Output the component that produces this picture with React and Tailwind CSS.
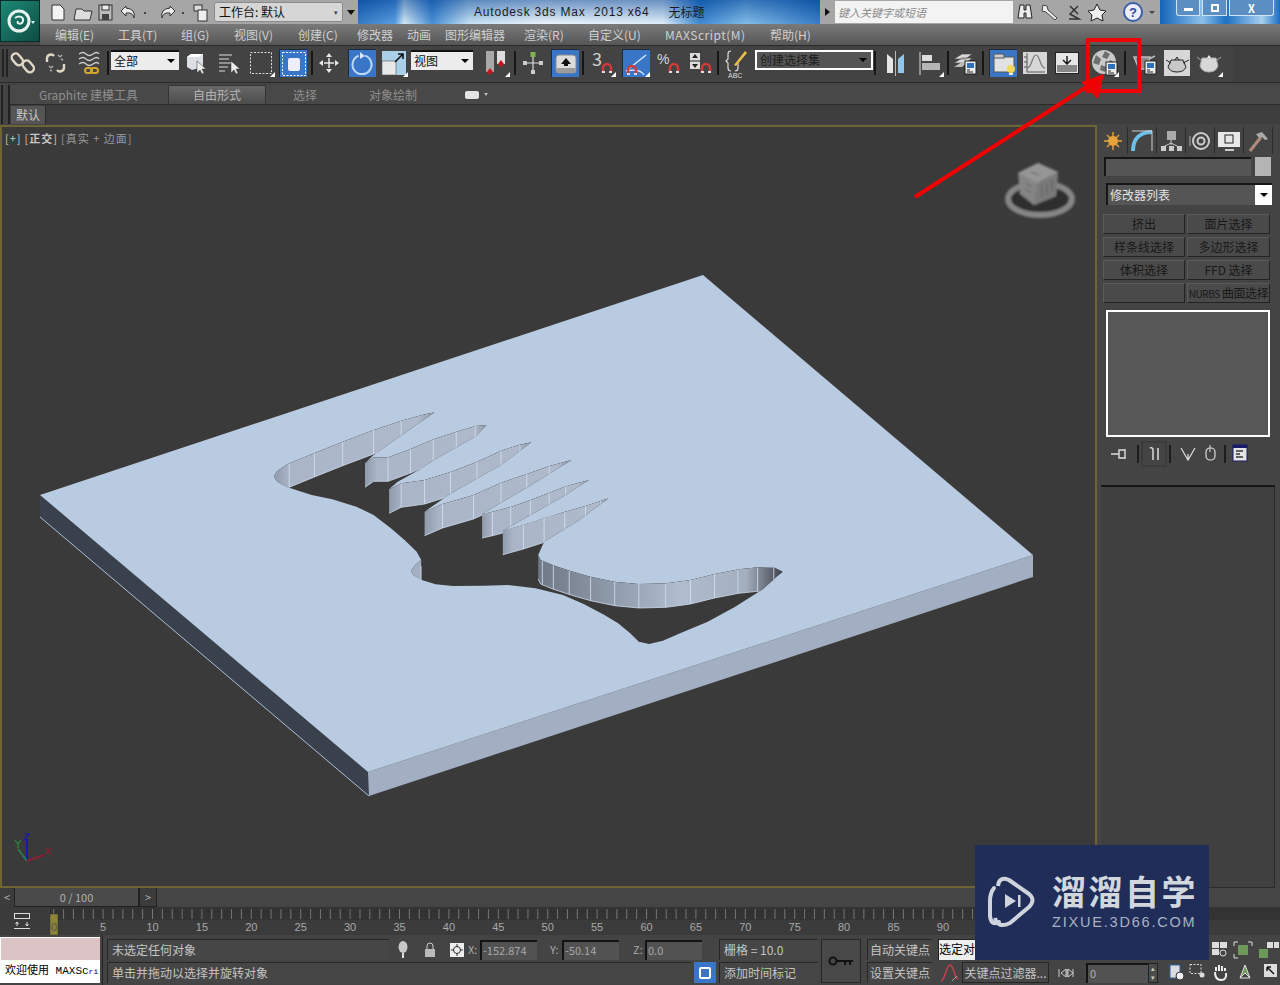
import React from "react";

// points below are read off a 3x crop of the hole, so convert back to page coords
const z = ([x, y]) => [260 + x / 2.904, 400 + y / 3];
const pts = (list) => list.map(z);
const str = (list) => list.map((p) => p[0].toFixed(1) + "," + p[1].toFixed(1)).join(" ");

const f1 = pts([[40,230],[48,215],[80,192],[160,158],[240,125],[330,90],[410,62],[470,45],[507,37]]);
const f2 = pts([[305,190],[330,172],[372,172],[435,148],[503,118],[570,95],[625,78],[658,75]]);
const f3 = pts([[375,268],[410,250],[478,240],[555,215],[630,185],[700,152],[750,135],[788,127]]);
const f4 = pts([[478,335],[530,312],[620,285],[700,248],[775,222],[840,198],[905,180]]);
const f5 = pts([[645,342],[675,335],[730,320],[785,300],[840,278],[890,258],[955,240]]);
const f6 = pts([[705,392],[765,375],[825,355],[885,335],[945,318],[1012,295]]);
const palm = pts([[808,465],[815,480],[850,495],[900,512],[960,530],[1030,545],[1100,552],[1180,550],[1250,540],[1320,522],[1390,508],[1445,502],[1495,503],[1518,515]]);
const hole = [
  ...f1, ...pts([[440,85],[330,165]]),
  ...f2, ...pts([[625,110],[505,180],[465,208],[400,245]]),
  ...f3, ...pts([[700,195],[555,280]]),
  ...f4, ...pts([[780,260]]),
  ...f5, ...pts([[880,290]]),
  ...f6, ...pts([[920,365],[825,425]]),
  ...palm,
  ...pts([[1500,530],[1460,568],[1380,620],[1300,665],[1220,700],[1170,722],[1130,732],[1100,725],[1075,700],[1040,670],[1000,645],[940,612],[880,585],[800,565],[720,555],[650,557],[560,558],[510,553],[470,540],[445,525],[438,512],[450,495],[468,480],[455,455],[420,420],[380,385],[330,345],[280,320],[210,298],[150,285],[80,262],[50,245]]),
];
const nubWall = pts([[468,480],[450,495],[438,512],[445,525],[468,540]]);

const fingers = [
  { line: f1, ticks: [85,158,240,330,410] },
  { line: f2, ticks: [372,437,503,570,625] },
  { line: f3, ticks: [410,478,553,630,700,755] },
  { line: f4, ticks: [530,620,700,775,840] },
  { line: f5, ticks: [675,728,785,840,888] },
  { line: f6, ticks: [765,825,885,945,990] },
];
const palmTicks = [820,852,898,960,1030,1100,1178,1250,1320,1388,1445,1492];

const yAt = (line, zx) => {
  const x = 260 + zx / 2.904;
  for (let i = 0; i < line.length - 1; i++) {
    if (x >= line[i][0] && x <= line[i + 1][0]) {
      const t = (x - line[i][0]) / (line[i + 1][0] - line[i][0] || 1);
      return line[i][1] + t * (line[i + 1][1] - line[i][1]);
    }
  }
  return line[0][1];
};
const wall = (line) => [...line, ...line.slice().reverse().map((p) => [p[0], p[1] + 24])];

const Plate = () => (
  <svg viewBox="0 125 1097 763" className="absolute inset-0 w-full h-full">
    <defs>
      <linearGradient id="wallG" x1="0" x2="1" y1="0" y2="0">
        <stop offset="0" stopColor="#8f9aab" />
        <stop offset="0.1" stopColor="#aab5c7" />
        <stop offset="0.9" stopColor="#aeb9cb" />
        <stop offset="1" stopColor="#8e98a8" />
      </linearGradient>
      <linearGradient id="palmG" x1="0" x2="1" y1="0" y2="0">
        <stop offset="0" stopColor="#6f7885" />
        <stop offset="0.3" stopColor="#8f9aaa" />
        <stop offset="0.58" stopColor="#b0bdce" />
        <stop offset="0.85" stopColor="#a3aebe" />
        <stop offset="1" stopColor="#3d424b" />
      </linearGradient>
      <clipPath id="holeClip"><polygon points={str(hole)} /></clipPath>
    </defs>
    <polygon points="40,495 368,772 369,796 40,517" fill="#39414d" />
    <polygon points="368,772 1033,555 1033,577 369,796" fill="#a2aec1" />
    <polygon points="40,495 703,275 1033,555 368,772" fill="#b9cbe1" />
    <polyline points="40,517 369,796" stroke="#aebfd6" strokeWidth="1" fill="none" />
    <polygon points={str(hole)} fill="#3a3a3a" />
    <g clipPath="url(#holeClip)">
      {fingers.map((f, i) => (
        <g key={i}>
          <polygon points={str(wall(f.line))} fill="url(#wallG)" />
          <polyline points={str(f.line.map((p) => [p[0], p[1] + 24]))} fill="none" stroke="#cfdcee" strokeWidth="0.8" />
          {f.ticks.map((t) => {
            const x = 260 + t / 2.904;
            const y = yAt(f.line, t);
            return <line key={t} x1={x} x2={x} y1={y} y2={y + 24} stroke="#d6e3f3" strokeWidth="0.8" />;
          })}
        </g>
      ))}
      <polygon points={str(wall(palm))} fill="url(#palmG)" />
      <polyline points={str(palm.map((p) => [p[0], p[1] + 24]))} fill="none" stroke="#cfdcee" strokeWidth="0.8" />
      {palmTicks.map((t) => {
        const x = 260 + t / 2.904;
        const y = yAt(palm, t);
        return <line key={t} x1={x} x2={x} y1={y} y2={y + 24} stroke="#d6e3f3" strokeWidth="0.8" />;
      })}
    </g>
    <polygon points={str(nubWall)} fill="#a3afc0" />
    <line x1="421" x2="421" y1="566" y2="580" stroke="#d6e3f3" strokeWidth="0.8" />
  </svg>
);

const ViewCube = () => (
  <svg width="80" height="70" viewBox="0 0 80 70" className="absolute left-[999px] top-[33px]">
    <defs><filter id="soft"><feGaussianBlur stdDeviation="0.9" /></filter></defs>
    <g filter="url(#soft)">
      <ellipse cx="41" cy="41" rx="32" ry="16" fill="#2f2f2f" stroke="#858585" strokeWidth="6" />
      <polygon points="19,15 39,5 59,14 57,38 35,47 21,36" fill="#858585" />
      <polygon points="19,15 39,5 59,14 38,25" fill="#969696" />
      <polygon points="38,25 59,14 57,38 35,47" fill="#7a7a7a" />
      <path d="M43 27v12M48 25v12M53 22v12M27 25l6 4M26 31l6 3M32 14l8 3" stroke="#5c5c5c" strokeWidth="1" />
    </g>
  </svg>
);

const AxisTripod = () => (
  <svg width="44" height="36" viewBox="0 0 44 36" className="absolute left-[10px] top-[706px]">
    <path d="M17 30V8" stroke="#1a1aa8" strokeWidth="2" />
    <path d="M25 3h5l-5 6h5" transform="translate(-11 0)" stroke="#1a1aa8" strokeWidth="1.2" fill="none" />
    <path d="M17 30L8 18" stroke="#2a7a4c" strokeWidth="2" />
    <path d="M5 9l3 4 3-4M8 13v4" stroke="#2f8a3a" strokeWidth="1.2" fill="none" />
    <path d="M17 30l17-6" stroke="#8a2030" strokeWidth="2" />
    <path d="M36 17l5 6M41 17l-5 6" stroke="#8a2030" strokeWidth="1.2" />
  </svg>
);

const Corner = () => <span className="absolute right-0 bottom-0 w-0 h-0 border-l-[5px] border-l-transparent border-b-[5px] border-b-white" />;

const Slot = ({ w = "w-[32px]", blue, corner, children }) => (
  <div className={`${w} h-[28px] flex items-center justify-center relative shrink-0`}>
    <div className={`w-[28px] h-[28px] flex items-center justify-center relative ${blue ? "bg-[#3a76c8] border-t border-l border-[#1e2a3a]" : ""}`}>
      {children}
      {corner && <Corner />}
    </div>
  </div>
);

const Ic = ({ children }) => <svg width="26" height="26" viewBox="0 0 26 26" fill="none">{children}</svg>;
const Cursor = ({ x, y }) => <path d={`M${x} ${y}v12l3-3 2 4 2-1-2-4h4z`} fill="#eee" stroke="#333" strokeWidth="0.5" />;
const Sep = ({ m = "mx-[2px]" }) => <div className={`w-[2px] h-[24px] bg-[#161616] shrink-0 ${m}`} />;
const Magnet = ({ x = 14, y = 16 }) => (
  <g transform={`translate(${x} ${y})`}>
    <path d="M0 9V4a4 4 0 018 0v5" stroke="#d23a3a" strokeWidth="2.5" />
    <path d="M-1 8h3M6 8h3" stroke="#ddd" strokeWidth="2" />
  </g>
);
const MiniDoc = ({ x, y }) => (
  <g transform={`translate(${x} ${y})`}>
    <rect width="11" height="13" fill="#eee" stroke="#222" />
    <rect x="2" y="2" width="7" height="5" fill="#2f6fb8" />
    <path d="M2 9h3M2 11h6" stroke="#222" />
  </g>
);

const Dropdown = ({ w, label, dark }) => (
  <div className={`${w} h-[20px] mb-[7px] shrink-0 flex items-center justify-between border-t-2 border-[#111] pl-[3px] pr-[4px] text-[12px] ${dark ? "bg-[#555] text-[#1d1d1d] border-2 border-white" : "bg-[#ececec] text-[#111]"}`}>
    <span className="leading-none">{label}</span>
    <span className="w-0 h-0 border-l-[4px] border-r-[4px] border-t-[4px] border-l-transparent border-r-transparent border-t-black" />
  </div>
);

const Toolbar = () => (
  <div className="h-[38px] pb-[2px] bg-[#434343] border-t border-b border-[#2a2a2a] flex items-center shrink-0 relative">
    <div className="w-[6px] h-[28px] ml-[2px] border-l-2 border-r-2 border-[#222] shrink-0 mr-[-2px]" />
    <Slot w="w-[33px]"><Ic>
      <rect x="3" y="3" width="8" height="13" rx="4" transform="rotate(-40 7 9)" stroke="#e0d8c4" strokeWidth="2.4" />
      <rect x="14" y="10" width="8" height="13" rx="4" transform="rotate(-40 18 16)" stroke="#e0d8c4" strokeWidth="2.4" />
    </Ic></Slot>
    <Slot w="w-[33px]"><Ic>
      <path d="M4 12V8a4 4 0 017-2M21 14v4a4 4 0 01-7 2" stroke="#e0d8c4" strokeWidth="2.4" />
      <path d="M15 5l2 2M19 5l-2 2M18 9l2 1M6 16l2 2M10 16l-2 2M7 20l2 1" stroke="#aaa" strokeWidth="1.4" />
    </Ic></Slot>
    <Slot w="w-[33px]"><Ic>
      <path d="M3 4q4-3 7 0t7 0 6 0M3 9q4-3 7 0t7 0 6 0M3 14q4-3 7 0t7 0 6 0" stroke="#cfcfcf" strokeWidth="1.3" />
      <rect x="9" y="18" width="7" height="5" rx="2.5" stroke="#d4a82a" strokeWidth="2" />
      <rect x="15" y="18" width="7" height="5" rx="2.5" stroke="#d4a82a" strokeWidth="2" />
    </Ic></Slot>
    <Sep />
    <Dropdown w="w-[68px]" label="全部" />
    <Slot w="w-[34px]"><Ic>
      <polygon points="4,7 8,4 20,4 20,17 9,20 4,17" fill="#dcdfe4" />
      <polygon points="8,4 20,4 16,7 4,7" fill="#fff" />
      <Cursor x={14} y={11} />
    </Ic></Slot>
    <Slot><Ic>
      <path d="M3 5h13M3 9h10M3 13h13M3 17h9M3 21h6" stroke="#ddd" strokeWidth="1.2" />
      <Cursor x={15} y={11} />
    </Ic></Slot>
    <Slot corner><Ic><rect x="2.5" y="2.5" width="21" height="21" stroke="#ddd" strokeDasharray="2 1.5" /></Ic></Slot>
    <Slot blue><Ic>
      <rect x="1.5" y="1.5" width="23" height="23" stroke="#fff" strokeDasharray="2 1.5" />
      <rect x="7" y="7" width="12" height="13" rx="2" fill="#eef" />
    </Ic></Slot>
    <Sep m="ml-[2px] mr-0" />
    <Slot w="w-[32px]"><Ic>
      <path d="M13 3l-3 4h6zM13 23l-3-4h6zM3 13l4-3v6zM23 13l-4-3v6z" fill="#e8e8e8" />
      <path d="M8 13h10M13 8v10" stroke="#e8e8e8" strokeWidth="1.5" />
    </Ic></Slot>
    <Slot w="w-[33px]" blue><Ic>
      <path d="M16 4.6a9.5 9.5 0 11-6.500.2" stroke="#bcd8f5" strokeWidth="2" />
      <path d="M11 1l5 4-5 3z" fill="#d6e8fb" />
    </Ic></Slot>
    <Slot corner><Ic>
      <rect x="1" y="1" width="24" height="24" fill="#a9cfe9" />
      <rect x="1" y="11" width="14" height="14" fill="#e8e8e8" stroke="#555" strokeWidth="0.6" />
      <path d="M14 12l8-8M17 4h5v5" stroke="#111" strokeWidth="1.6" />
    </Ic></Slot>
    <Dropdown w="w-[62px] ml-[1px]" label="视图" />
    <div className="w-[5px] shrink-0" />
    <Slot w="w-[35px]" corner><Ic>
      <rect x="3" y="1" width="8" height="21" fill="#a9a9a9" /><rect x="14" y="1" width="8" height="13" fill="#ddd" />
      <path d="M7 18l3 4-3 3-3-3zM18 10l3 4-3 3-3-3z" fill="#c8161d" />
    </Ic></Slot>
    <Sep m="mx-[1px]" />
    <Slot><Ic>
      <path d="M13 5v16M5 13h16" stroke="#ddd" strokeWidth="1.2" />
      <rect x="10.500" y="2" width="5" height="5" fill="#7db54a" />
      <rect x="3" y="11" width="4" height="4" fill="#ccc" /><rect x="19" y="11" width="4" height="4" fill="#ccc" /><rect x="11" y="20" width="4" height="4" fill="#ccc" />
    </Ic></Slot>
    <Slot blue><Ic>
      <rect x="3" y="4" width="20" height="18" rx="3" fill="#dcdcdc" stroke="#888" />
      <path d="M13 7l-5 6h3v2h4v-2h3z" fill="#111" />
      <rect x="3" y="17" width="20" height="5" rx="2" fill="#9b9b9b" />
    </Ic></Slot>
    <Sep m="mx-[1px]" />
    <Slot w="w-[34px]" corner><span className="text-[18px] text-[#d0d0d0] leading-none absolute left-[4px] top-[0px]">3</span><svg width="26" height="26" viewBox="0 0 26 26" fill="none"><Magnet x={14} y={14} /></svg></Slot>
    <Slot w="w-[34px]" blue corner><Ic>
      <path d="M2 20L22 4M2 20q14-3 18 4" stroke="#dfefff" strokeWidth="1.3" />
      <Magnet x={4} y={15} />
    </Ic></Slot>
    <Slot w="w-[31px]"><Ic>
      <text x="1" y="14" fill="#d8d8d8" fontSize="14" fontFamily="Liberation Sans">%</text>
      <Magnet x={14} y={14} />
    </Ic></Slot>
    <Slot w="w-[31px]"><Ic>
      <rect x="3" y="3" width="10" height="16" fill="#ddd" />
      <path d="M8 4l-3 4h6zM8 18l-3-4h6z" fill="#222" />
      <path d="M3 11h10" stroke="#222" />
      <Magnet x={15} y={14} />
    </Ic></Slot>
    <Sep m="ml-[2px] mr-[1px]" />
    <Slot><svg width="26" height="30" viewBox="0 0 26 30" fill="none">
      <path d="M8 3q-3 0-3 3v5l-2 2 2 2v5q0 3 3 3M15 13v7q0 3-3 3" stroke="#ddd" strokeWidth="1.2" />
      <path d="M11 17L22 3l2 2-11 13z" fill="#e8c04a" />
      <text x="5" y="30" fill="#ddd" fontSize="7" fontFamily="Liberation Sans">ABC</text>
    </svg></Slot>
    <div className="w-[3px] shrink-0" />
    <Dropdown w="w-[118px]" label="创建选择集" dark />
    <Sep m="ml-[1px] mr-[4px]" />
    <Slot><Ic>
      <path d="M4 4l6 5v14H4z" fill="#e6e6e6" />
      <path d="M21 4l-6 5v14h6z" fill="#8fc7ec" />
      <path d="M12.500 1v25" stroke="#bbb" />
    </Ic></Slot>
    <div className="w-[2px] shrink-0" />
    <Slot corner><Ic>
      <path d="M3 2v23" stroke="#ddd" />
      <rect x="5" y="5" width="10" height="6" fill="#ddd" /><rect x="5" y="13" width="18" height="7" fill="#b5b5b5" />
    </Ic></Slot>
    <Sep m="ml-[1px] mr-0" />
    <Slot><Ic>
      <path d="M2 13l8-5h10l-6 5zM2 9l8-5h10l-6 5z" fill="#d8d8d8" stroke="#444" strokeWidth="0.6" />
      <path d="M2 17l8-5h6l-6 5z" fill="#bbb" />
      <MiniDoc x={13} y={11} />
    </Ic></Slot>
    <Sep m="ml-[1px] mr-[3px]" />
    <Slot blue><Ic>
      <rect x="3" y="6" width="20" height="15" fill="#e2e2e2" stroke="#555" /><rect x="3" y="3" width="10" height="4" fill="#ccc" stroke="#555" />
      <circle cx="20" cy="18" r="4" fill="#f3d75a" /><path d="M18 23h4" stroke="#eee" strokeWidth="2" />
    </Ic></Slot>
    <Slot><Ic>
      <rect x="1" y="2" width="24" height="22" fill="#d7d7d7" />
      <path d="M5 3v19h18M2 7h3M2 12h3M2 17h3" stroke="#555" />
      <path d="M5 18c5 0 5-13 9-13s4 13 9 13" stroke="#777" strokeWidth="1.2" />
    </Ic></Slot>
    <Slot><Ic>
      <rect x="1.500" y="2.500" width="23" height="21" fill="#e6e6e6" stroke="#222" />
      <rect x="3" y="15" width="20" height="7" fill="#888" />
      <path d="M13 6v7M9 10l4 4 4-4" stroke="#111" strokeWidth="1.4" />
    </Ic></Slot>
    <div className="w-[6px] shrink-0" />
    <Slot corner><Ic>
      <circle cx="12" cy="12" r="12" fill="#c9c9c9" />
      <path d="M4 5l5 4-2 6-6-2zM13 1l5 3-3 5-5-2zM9 15l6 2-2 5-5-2zM18 10l4 2-2 6-4-3z" fill="#6e6e6e" />
      <MiniDoc x={14} y={12} />
    </Ic></Slot>
    <Sep m="mx-[3px]" />
    <Slot><Ic>
      <path d="M2 7h16l-3 12H7zM17 9l6-3" stroke="#bbb" strokeWidth="1.5" fill="#8a8a8a" />
      <MiniDoc x={13} y={11} />
    </Ic></Slot>
    <Slot><Ic>
      <rect x="-1" y="0" width="28" height="26" fill="#d7d7d7" />
      <path d="M7 10h12l3 7q-2 5-9 5t-9-5zM7 13L2 10M19 13l6-3M11 10l2-3 2 3" stroke="#222" fill="#c8c8c8" />
    </Ic></Slot>
    <Slot corner><Ic>
      <path d="M6 8h14l2 8q-2 6-9 6t-9-6zM6 11L1 7M20 11l5-4" stroke="#aaa" fill="#d8d8d8" />
      <path d="M11 8l2-3 2 3" fill="#eee" />
    </Ic></Slot>
    <div className="absolute right-0 top-0 bottom-0 w-[46px] bg-[#3f3f3f]" />
  </div>
);

const MENU = [
  ["编辑(E)", "w-[63px]"], ["工具(T)", "w-[63px]"], ["组(G)", "w-[53px]"], ["视图(V)", "w-[64px]"],
  ["创建(C)", "w-[59px]"], ["修改器", "w-[50px]"], ["动画", "w-[38px]"], ["图形编辑器", "w-[79px]"],
  ["渲染(R)", "w-[64px]"], ["自定义(U)", "w-[77px]"], ["MAXScript(M)", "w-[105px] tracking-[0.5px]"], ["帮助(H)", "w-[60px]"],
];

const TitleBar = () => (
  <div className="h-[24px] flex items-stretch bg-[#a6a6a6]">
    <div className="w-[318px] flex items-center pl-[8px] relative shrink-0">
      <svg width="170" height="20" viewBox="0 0 170 20" fill="none" className="shrink-0">
        <path d="M4 3h8l4 4v11H4z" fill="#f4f4f4" stroke="#333" />
        <path d="M28 7h6l2 2h8l-2 9H26z" fill="#ddd" stroke="#333" />
        <rect x="51" y="3" width="13" height="15" fill="#bbb" stroke="#333" /><rect x="54" y="3" width="7" height="5" fill="#eee" stroke="#333" /><rect x="54" y="12" width="7" height="6" fill="#444" />
        <path d="M78 4l-5 5 5 5v-3q7-1 8 5 2-9-8-10z" fill="#eee" stroke="#333" />
        <rect x="96" y="10" width="2" height="2" fill="#444" />
        <path d="M122 4l5 5-5 5v-3q-7-1-8 5-2-9 8-10z" fill="#eee" stroke="#333" />
        <rect x="134" y="10" width="2" height="2" fill="#444" />
        <rect x="146" y="3" width="8" height="6" fill="#ddd" stroke="#333" /><rect x="150" y="8" width="9" height="11" fill="#eee" stroke="#333" />
      </svg>
      <div className="w-[129px] h-[20px] ml-[-4px] bg-[#d6d6d6] border border-[#8a8a8a] rounded-[2px] flex items-center justify-between px-[4px] text-[12px] text-[#111]">
        <span>工作台: 默认</span>
        <span className="text-[7px] text-[#444]">▾</span>
      </div>
      <span className="w-0 h-0 ml-[4px] border-l-[4px] border-r-[4px] border-t-[5px] border-l-transparent border-r-transparent border-t-[#111]" />
    </div>
    <div className="w-[462px] shrink-0 flex items-center relative bg-[linear-gradient(90deg,#1565b8_0%,#3d8fdb_8%,#cfe6f6_10%,#2b7ccc_16%,#bcdcf2_24%,#e8f2fa_40%,#dcecf8_66%,#1f75c8_74%,#6eb1e4_84%,#1566ba_100%)]">
      <div className="absolute inset-0 bg-[linear-gradient(180deg,rgba(10,70,150,0.55),rgba(255,255,255,0.15))]" />
      <span className="relative ml-[116px] text-[12px] tracking-[0.8px] text-[#1c1c1c] font-['Liberation_Sans','Noto_Sans_CJK_SC',sans-serif] whitespace-pre">Autodesk 3ds Max  2013 x64</span>
      <span className="relative ml-[19px] text-[12px] text-[#1c1c1c]">无标题</span>
    </div>
    <div className="w-[15px] shrink-0 flex items-center justify-center">
      <span className="w-0 h-0 border-t-[4px] border-b-[4px] border-l-[5px] border-t-transparent border-b-transparent border-l-[#111]" />
    </div>
    <div className="w-[178px] h-[22px] bg-[#f3f3f3] shrink-0 self-center flex items-center pl-[3px] text-[11px] italic text-[#8a8a8a]">键入关键字或短语</div>
    <div className="w-[147px] shrink-0 flex items-center">
      <svg width="147" height="22" viewBox="0 0 147 22" fill="none">
        <path d="M7 4h4v5h2V4h4l2 13h-6V12h-2v5H5z" fill="#eee" stroke="#222" />
        <path d="M30 4l4 1 1 4 9 8-2 2-9-8-4-1z" fill="#eee" stroke="#444" />
        <path d="M57 5l8 8M65 5l-8 8 9 5H56" stroke="#333" strokeWidth="1.500" />
        <path d="M84 3l3 6 6 1-4 4 1 6-6-3-6 3 1-6-4-4 6-1z" fill="#eee" stroke="#222" />
        <circle cx="120" cy="11" r="9" fill="#eef" stroke="#3a5fa8" strokeWidth="2" />
        <text x="116" y="16" fontSize="13" fontWeight="700" fill="#2a4a9c" fontFamily="Liberation Sans">?</text>
        <path d="M136 10l3 3 3-3z" fill="#444" />
      </svg>
    </div>
    <div className="flex-1 flex items-start pl-[16px] bg-[linear-gradient(90deg,#1565b8,#8cc0ea_35%,#1e70c2_55%,#a8d0ee_85%,#1b6cc0)]">
      <div className="w-[24px] h-[16px] rounded-bl-[3px] bg-[#5b8fc4] border border-[#d0e4f5] border-t-0 flex items-center justify-center">
        <span className="w-[9px] h-[3px] bg-white mt-[3px]" />
      </div>
      <div className="w-[25px] h-[16px] ml-[2px] bg-[#5b8fc4] border border-[#d0e4f5] border-t-0 flex items-center justify-center">
        <span className="w-[8px] h-[8px] border-2 border-white" />
      </div>
      <div className="w-[45px] h-[16px] ml-[2px] rounded-br-[3px] bg-[#5b8fc4] border border-[#d0e4f5] border-t-0 flex items-center justify-center text-[11px] font-bold text-white leading-[14px]">X</div>
    </div>
  </div>
);

const Header = () => (
  <div className="flex shrink-0 h-[45px]">
    <div className="w-[40px] h-[42px] bg-[linear-gradient(135deg,#1c8a76,#0e4c43)] border border-[#082e28] flex items-center justify-center shrink-0">
      <svg width="30" height="30" viewBox="0 0 30 30" fill="none">
        <circle cx="14" cy="15" r="10" stroke="#e8f4f0" strokeWidth="3" />
        <path d="M10 12c4-3 9-1 8 3s-7 3-5 0" stroke="#e8f4f0" strokeWidth="2" />
        <path d="M26 15l4 0-2 3z" fill="#cfe" />
      </svg>
    </div>
    <div className="flex-1 min-w-0 flex flex-col">
      <TitleBar />
      <div className="h-[21px] flex items-center pl-[15px] bg-[linear-gradient(180deg,#7a7a7a,#565656)] text-[12px] text-[#cfcfcf]">
        {MENU.map(([label, w]) => <span key={label} className={`${w} shrink-0`}>{label}</span>)}
      </div>
    </div>
  </div>
);

const Ribbon = () => (
  <div className="shrink-0 mt-[2px] flex">
    <div className="w-[9px] h-[39px] border-l-2 border-r-2 border-[#222] ml-[1px] shrink-0" />
    <div className="flex-1">
      <div className="h-[20px] bg-[#484848] border-b border-[#2b2b2b] flex items-end text-[12px] text-[#8e8e8e]">
        <span className="w-[158px] pl-[29px] self-center">Graphite 建模工具</span>
        <span className="w-[98px] h-[19px] bg-[linear-gradient(180deg,#676767,#4c4c4c)] border border-[#333] border-b-0 rounded-t-[2px] flex items-center justify-center text-[#b5b5b5]">自由形式</span>
        <span className="w-[78px] text-center self-center">选择</span>
        <span className="w-[98px] text-center self-center">对象绘制</span>
        <span className="self-center ml-[23px] w-[14px] h-[8px] bg-[#e4e4e4] rounded-[2px]" />
        <span className="self-center ml-[5px] w-0 h-0 border-l-[2px] border-r-[2px] border-t-[3px] border-l-transparent border-r-transparent border-t-[#bbb]" />
      </div>
      <div className="h-[19px] bg-[#3e3e3e] flex items-center pl-[1px] text-[12px] text-[#c8c8c8]">
        <span className="w-[35px] h-[18px] bg-[#555] border-r border-[#2b2b2b] flex items-center justify-center">默认</span>
      </div>
    </div>
  </div>
);

const Viewport = () => (
  <div className="relative w-[1097px] shrink-0 bg-[#3a3a3a] border-2 border-[#6f6534] overflow-hidden">
    <div className="absolute left-[3px] top-[3px] z-10 text-[11px] text-[#c8c8c8] flex items-center gap-[3px] tracking-[1px] whitespace-pre">
      <span>[+]</span><span>[<b className="font-bold">正交</b>]</span><span className="text-[#999]">[真实 + 边面]</span>
    </div>
    <div className="absolute -left-[2px] -top-[2px] w-[1097px] h-[763px]">
      <Plate />
      <ViewCube />
      <AxisTripod />
    </div>
  </div>
);

const CmdButton = ({ children, cls = "" }) => (
  <div className={`h-[20px] bg-[#4a4a4a] border border-t-[#5a5a5a] border-l-[#5a5a5a] border-r-[#222] border-b-[#222] flex items-center justify-center text-[12px] text-[#181818] whitespace-nowrap overflow-hidden ${cls}`}>{children}</div>
);

const CommandPanel = () => (
  <div className="flex-1 min-w-0 bg-[#444] flex flex-col">
    <div className="h-[27px] mt-[2px] flex items-center pl-[2px]">
      {[
        <svg key="a" width="24" height="24" viewBox="0 0 24 24"><circle cx="12" cy="12" r="5" fill="#e7a23b" /><path d="M12 3v18M3 12h18M6 6l12 12M18 6L6 18" stroke="#e7a23b" strokeWidth="1.4" /></svg>,
        <svg key="b" width="24" height="24" viewBox="0 0 24 24" fill="none"><path d="M3 22C3 10 10 3 22 3" stroke="#6cc0e8" strokeWidth="4" /><path d="M2 2h20v20" stroke="#ccc" /></svg>,
        <svg key="c" width="24" height="24" viewBox="0 0 24 24" fill="none"><rect x="8" y="2" width="9" height="9" fill="#aaa" /><path d="M12 11v5M4 18l8-4 8 4" stroke="#ccc" /><rect x="2" y="17" width="5" height="5" fill="#ccc" /><rect x="10" y="17" width="5" height="5" fill="#ccc" /><rect x="18" y="17" width="5" height="5" fill="#ccc" /></svg>,
        <svg key="d" width="24" height="24" viewBox="0 0 24 24" fill="none"><circle cx="13" cy="12" r="8" stroke="#ccc" strokeWidth="2" /><circle cx="13" cy="12" r="3.500" stroke="#ccc" strokeWidth="2" /><path d="M2 7v10" stroke="#888" strokeWidth="1.500" /></svg>,
        <svg key="e" width="24" height="24" viewBox="0 0 24 24" fill="none"><rect x="1" y="3" width="22" height="15" fill="#e8e8e8" /><rect x="8" y="6" width="8" height="8" stroke="#222" /><path d="M8 21h9" stroke="#ccc" strokeWidth="2" /></svg>,
        <svg key="f" width="24" height="24" viewBox="0 0 24 24" fill="none"><path d="M4 22L15 8" stroke="#b08a7a" strokeWidth="3" /><path d="M10 5l6-2 6 7-3 1-3-3-3 1z" fill="#aaa" /></svg>,
      ].map((icon, i) => (
        <div key={i} className="w-[29px] h-[27px] flex items-center justify-center border-r border-[#2b2b2b] shrink-0">{icon}</div>
      ))}
    </div>
    <div className="h-[19px] mt-[3px] ml-[7px] flex gap-[4px]">
      <div className="w-[147px] bg-[#555] border-t-2 border-l-2 border-[#161616]" />
      <div className="w-[16px] bg-[#b4b4b4]" />
    </div>
    <div className="h-[22px] mt-[7px] ml-[9px] w-[166px] bg-[#555] border-t-2 border-l-2 border-[#161616] flex items-center justify-between text-[12px] text-[#e4e4e4] pl-[2px]">
      <span>修改器列表</span>
      <span className="w-[17px] h-[20px] bg-white flex items-center justify-center">
        <span className="w-0 h-0 border-l-[4px] border-r-[4px] border-t-[4px] border-l-transparent border-r-transparent border-t-black" />
      </span>
    </div>
    <div className="mt-[9px] ml-[6px] w-[168px] grid grid-cols-[82px_83px] gap-x-[2px] gap-y-[3px]">
      <CmdButton>挤出</CmdButton>
      <CmdButton>面片选择</CmdButton>
      <CmdButton>样条线选择</CmdButton>
      <CmdButton>多边形选择</CmdButton>
      <CmdButton>体积选择</CmdButton>
      <CmdButton>FFD 选择</CmdButton>
      <CmdButton />
      <CmdButton cls="text-[11px] tracking-[-0.4px]"><span className="text-[10px] mr-[2px]">NURBS</span>曲面选择</CmdButton>
    </div>
    <div className="mt-[7px] ml-[9px] w-[164px] h-[127px] bg-[#575757] border-2 border-white shrink-0" />
    <div className="h-[32px] mt-[1px] ml-[12px] flex items-center text-[#ddd]">
      <svg width="146" height="26" viewBox="0 0 146 26" fill="none">
        <path d="M2 13h8M10 9h6v8h-6zM16 8v10" stroke="#ddd" strokeWidth="1.400" />
        <path d="M29 4v18" stroke="#111" strokeWidth="1.500" />
        <rect x="33" y="1" width="24" height="24" stroke="#333" />
        <path d="M41 7q3-1 3 2v10M49 7v12" stroke="#ddd" strokeWidth="1.500" />
        <path d="M61 4v18" stroke="#111" strokeWidth="1.500" />
        <path d="M72 7l7 12 7-12M79 13v6" stroke="#ddd" strokeWidth="1.200" />
        <rect x="97" y="7" width="9" height="12" rx="4" stroke="#ddd" strokeWidth="1.200" /><path d="M101 4v7" stroke="#ddd" />
        <path d="M116 4v18" stroke="#111" strokeWidth="1.500" />
        <rect x="124" y="4" width="14" height="16" fill="#e4e4e4" stroke="#1a1a6a" /><rect x="124" y="4" width="14" height="3" fill="#1a1a6a" />
        <path d="M127 10h7M127 13h4M127 16h7" stroke="#333" strokeWidth="1.500" />
      </svg>
    </div>
    <div className="h-[2px] mt-[15px] bg-[#161616] ml-[4px] mr-[5px] shrink-0" />
    <div className="flex-1 bg-[#404040] border-r border-[#2b2b2b] border-b border-b-[#2b2b2b] ml-[4px] mr-[5px]" />
  </div>
);

const SliderRow = () => (
  <div className="h-[19px] shrink-0 bg-[#454545] flex items-stretch text-[11px] text-[#b0b0b0]">
    <div className="w-[15px] bg-[#3c3c3c] border-r border-[#222] flex items-center justify-center">&lt;</div>
    <div className="w-[125px] bg-[#4a4a4a] border-r-2 border-b border-[#222] flex items-center justify-center">0 / 100</div>
    <div className="w-[17px] bg-[#3c3c3c] border-r border-b border-[#222] flex items-center justify-center">&gt;</div>
  </div>
);

const FRAMES = Array.from({ length: 101 }, (_, i) => i);

const TrackBar = () => (
  <div className="h-[28px] shrink-0 bg-[#3b3b3b] flex items-stretch relative">
    <div className="w-[50px] shrink-0 flex items-center pl-[12px]">
      <svg width="20" height="20" viewBox="0 0 20 20" fill="none" stroke="#ddd">
        <rect x="2.500" y="2.500" width="15" height="5" /><path d="M5 11v4M3.500 13L5 11l1.500 2M15 15v-4M13.500 13l1.500 2 1.500-2M2 17.500h16" />
      </svg>
    </div>
    <svg width="1230" height="28" viewBox="0 0 1230 28" className="shrink-0">
      <rect width="1230" height="13" fill="#333" />
      {FRAMES.map((f) => <line key={f} x1={3.7 + f * 9.88} x2={3.7 + f * 9.88} y1="2" y2="12" stroke="#888" strokeWidth="0.8" />)}
      {FRAMES.filter((f) => f % 5 === 0 && f > 0).map((f) => (
        <text key={f} x={3.7 + f * 9.88} y="24" textAnchor="middle" fontSize="11" fill="#a8a8a8" fontFamily="Liberation Sans">{f}</text>
      ))}
      <rect x="0" y="7" width="8" height="21" fill="#8c8436" stroke="#333" strokeWidth="0.5" />
      <text x="4" y="24" textAnchor="middle" fontSize="11" fill="#555" fontFamily="Liberation Sans">0</text>
    </svg>
  </div>
);

const Field = ({ label, value, ml }) => (
  <div className={`flex items-center shrink-0 ${ml}`}>
    <span className="text-[11px] text-[#aaa] w-[12px]">{label}</span>
    <div className="w-[57px] h-[20px] bg-[#525252] border-t-2 border-l-2 border-[#141414] text-[11px] text-[#a8a8a8] flex items-center pl-[1px] overflow-hidden">{value}</div>
  </div>
);

const Flat = ({ cls = "", children }) => (
  <div className={`h-[21px] shrink-0 bg-[#464646] border-t border-l border-[#262626] flex items-center text-[12px] text-[#c4c4c4] ${cls}`}>{children}</div>
);

const StatusBar = () => (
  <div className="flex-1 bg-[#444] flex items-stretch min-h-0">
    <div className="w-[100px] shrink-0 flex flex-col pt-[2px]">
      <div className="h-[23px] bg-[#dcc4c6] border-t border-l border-white" />
      <div className="h-[23px] bg-white flex items-center pl-[5px] text-[11px] text-black whitespace-nowrap overflow-hidden font-['Liberation_Mono','Noto_Sans_CJK_SC',monospace]">欢迎使用 MAXSc<span className="text-[8px]">ri</span></div>
    </div>
    <div className="w-[7px] shrink-0 border-l border-[#222] ml-[2px] mr-[5px]" />
    <div className="flex flex-col pt-[4px] gap-[2px] w-[605px] shrink-0 ml-[-7px]">
      <div className="flex items-center h-[21px]">
        <Flat cls="w-[282px] pl-[4px]">未选定任何对象</Flat>
        <svg width="76" height="20" viewBox="0 0 76 20" fill="none" className="ml-[3px] shrink-0">
          <ellipse cx="11" cy="7" rx="4.500" ry="6" fill="#c8c8c8" /><path d="M11 13v5" stroke="#ddd" strokeWidth="2" />
          <path d="M35 9V6a3 3 0 016 0v3" stroke="#ccc" /><rect x="33" y="9" width="10" height="8" fill="#bbb" />
          <rect x="58" y="3" width="14" height="14" fill="#eee" /><circle cx="65" cy="10" r="3.500" stroke="#333" /><path d="M65 4v3M65 13v3M59 10h3M68 10h3" stroke="#333" />
        </svg>
        <Field label="X:" value="-152.874" ml="ml-0" />
        <Field label="Y:" value="-50.14" ml="ml-[13px]" />
        <Field label="Z:" value="0.0" ml="ml-[14px]" />
      </div>
      <div className="flex items-center h-[21px]">
        <Flat cls="w-[584px] pl-[4px] border-r-0">单击并拖动以选择并旋转对象</Flat>
        <div className="w-[22px] h-[21px] bg-[#3a76c8] ml-[3px] flex items-center justify-center shrink-0">
          <span className="w-[12px] h-[12px] border-2 border-white rounded-[2px]" />
        </div>
      </div>
    </div>
    <div className="flex flex-col pt-[4px] gap-[2px] ml-[7px] w-[99px] shrink-0">
      <Flat cls="pl-[4px]">栅格 = 10.0</Flat>
      <Flat cls="pl-[4px]">添加时间标记</Flat>
    </div>
    <div className="w-[40px] h-[44px] mt-[4px] ml-[3px] bg-[#484848] border border-[#262626] flex items-center justify-center shrink-0">
      <svg width="26" height="10" viewBox="0 0 26 10" fill="none"><circle cx="5" cy="5" r="3.500" stroke="#111" strokeWidth="2" /><path d="M9 5h16M17 5v4M22 5v4" stroke="#111" strokeWidth="2" /></svg>
    </div>
    <div className="flex flex-col pt-[4px] gap-[2px] ml-[6px] w-[65px] shrink-0">
      <Flat cls="justify-center">自动关键点</Flat>
      <Flat cls="justify-center">设置关键点</Flat>
    </div>
    <div className="flex flex-col pt-[4px] gap-[2px] ml-[6px] flex-1 min-w-0">
      <div className="flex items-center h-[21px] min-w-0">
        <div className="w-[62px] h-[21px] shrink-0 bg-[#eee] text-[12px] text-black border-t border-l border-[#222] whitespace-nowrap">选定对象</div>
        <div className="flex items-center justify-end flex-1">
          <svg width="70" height="21" viewBox="0 0 70 21" fill="none">
            <rect x="2" y="3" width="7" height="6" fill="#ddd" /><rect x="10" y="3" width="7" height="6" fill="#ddd" /><rect x="2" y="10" width="7" height="6" fill="#ddd" /><circle cx="13" cy="14" r="3" stroke="#ddd" />
            <rect x="28" y="6" width="10" height="10" fill="#6d9a5a" /><path d="M24 7V3h4M38 3h4v4M24 15v4h4" stroke="#ddd" />
            <rect x="49" y="10" width="9" height="9" fill="#6d9a5a" /><rect x="57" y="3" width="6" height="6" fill="#ddd" /><rect x="64" y="3" width="5" height="6" fill="#ddd" />
          </svg>
        </div>
      </div>
      <div className="flex items-center h-[21px] min-w-0">
        <svg width="24" height="21" viewBox="0 0 24 21" fill="none" className="shrink-0">
          <path d="M3 19C7 19 8 3 12 3s4 13 8 14" stroke="#c93f4a" strokeWidth="1.500" /><path d="M14 19l5-5" stroke="#9aa" />
        </svg>
        <Flat cls="w-[87px] justify-center border-r border-b whitespace-nowrap">关键点过滤器...</Flat>
        <svg width="26" height="14" viewBox="0 0 26 14" fill="none" className="ml-[8px] shrink-0">
          <path d="M2 3v8M10 3v8M16 3v8" stroke="#ccc" /><path d="M9 3L4 7l5 4zM11 3l5 4-5 4z" stroke="#ccc" />
        </svg>
        <div className="w-[62px] h-[20px] ml-[3px] bg-[#525252] border-t-2 border-l-2 border-[#141414] text-[11px] text-[#b0b0b0] pl-[2px] flex items-center shrink-0">0</div>
        <div className="w-[10px] h-[20px] bg-[#4c4c4c] border border-[#222] text-[7px] leading-[9px] text-[#ccc] text-center shrink-0">▴<br />▾</div>
        <svg width="112" height="21" viewBox="0 0 112 21" fill="none" className="ml-[10px] shrink-0">
          <rect x="2" y="3" width="10" height="13" fill="#dcdcdc" stroke="#2f5f9f" /><circle cx="12" cy="14" r="4" fill="#eee" stroke="#333" />
          <rect x="22" y="2.500" width="11" height="9" stroke="#ddd" strokeDasharray="2 1.500" /><circle cx="34" cy="13" r="2.500" fill="#ddd" />
          <path d="M48 9V5M51 9V3M54 9V4M57 9V6M47 10q0 8 6 8t5-7" stroke="#eee" strokeWidth="2" />
          <path d="M77 3l-5 13h10zM72 16l5-5 5 5" stroke="#ddd" fill="#6d9a5a" />
          <rect x="96" y="2" width="13" height="13" fill="#ddd" /><path d="M99 5l7 7M99 5v4M99 5h4" stroke="#111" strokeWidth="1.400" />
        </svg>
      </div>
    </div>
  </div>
);

const Watermark = () => (
  <div className="absolute left-[975px] top-[845px] w-[234px] h-[115px] bg-[#1f2d58] flex items-center pl-[12px] z-20">
    <svg width="50" height="62" viewBox="0 0 50 62" fill="none" className="shrink-0 mt-[-1px]">
      <path d="M11 15Q12 5 22 9l20 14q7 6 0 13L23 52Q11 58 8 47" stroke="#ced3dc" strokeWidth="4" strokeLinejoin="round" />
      <path d="M7 17Q3 22 3 30v15q1 10 9 6" stroke="#ced3dc" strokeWidth="4" strokeLinecap="round" />
      <path d="M18 23l11 7-11 7z" fill="#ced3dc" />
      <rect x="31" y="24" width="2.500" height="12" fill="#ced3dc" />
    </svg>
    <div className="ml-[15px] flex flex-col mt-[-2px]">
      <span className="text-[34px] leading-[38px] font-bold text-[#d2d6dd] tracking-[2.500px] whitespace-nowrap font-['Noto_Sans_CJK_SC',sans-serif]">溜溜自学</span>
      <span className="text-[14.5px] leading-[18px] mt-[3px] text-[#aab2c2] tracking-[1.800px] whitespace-nowrap font-['Liberation_Sans',sans-serif]">ZIXUE.3D66.COM</span>
    </div>
  </div>
);

const RedArrow = () => (
  <svg width="200" height="135" viewBox="0 0 200 135" className="absolute left-[910px] top-[70px] z-10">
    <path d="M5 127L178 16" stroke="#f00202" strokeWidth="4" />
    <polygon points="194,4 171,12 188,29" fill="#f00202" />
  </svg>
);

export default function App() {
  return (
    <div className="relative w-[1280px] h-[985px] overflow-hidden bg-[#444] flex flex-col font-['Noto_Sans_CJK_SC','Liberation_Sans',sans-serif]">
      <Header />
      <Toolbar />
      <Ribbon />
      <div className="h-[763px] mt-[1px] flex shrink-0">
        <Viewport />
        <CommandPanel />
      </div>
      <SliderRow />
      <TrackBar />
      <StatusBar />
      <RedArrow />
      <div className="absolute left-[1086px] top-[38px] w-[55px] h-[55px] border-[4px] border-[#f00202] z-10" />
      <Watermark />
    </div>
  );
}
